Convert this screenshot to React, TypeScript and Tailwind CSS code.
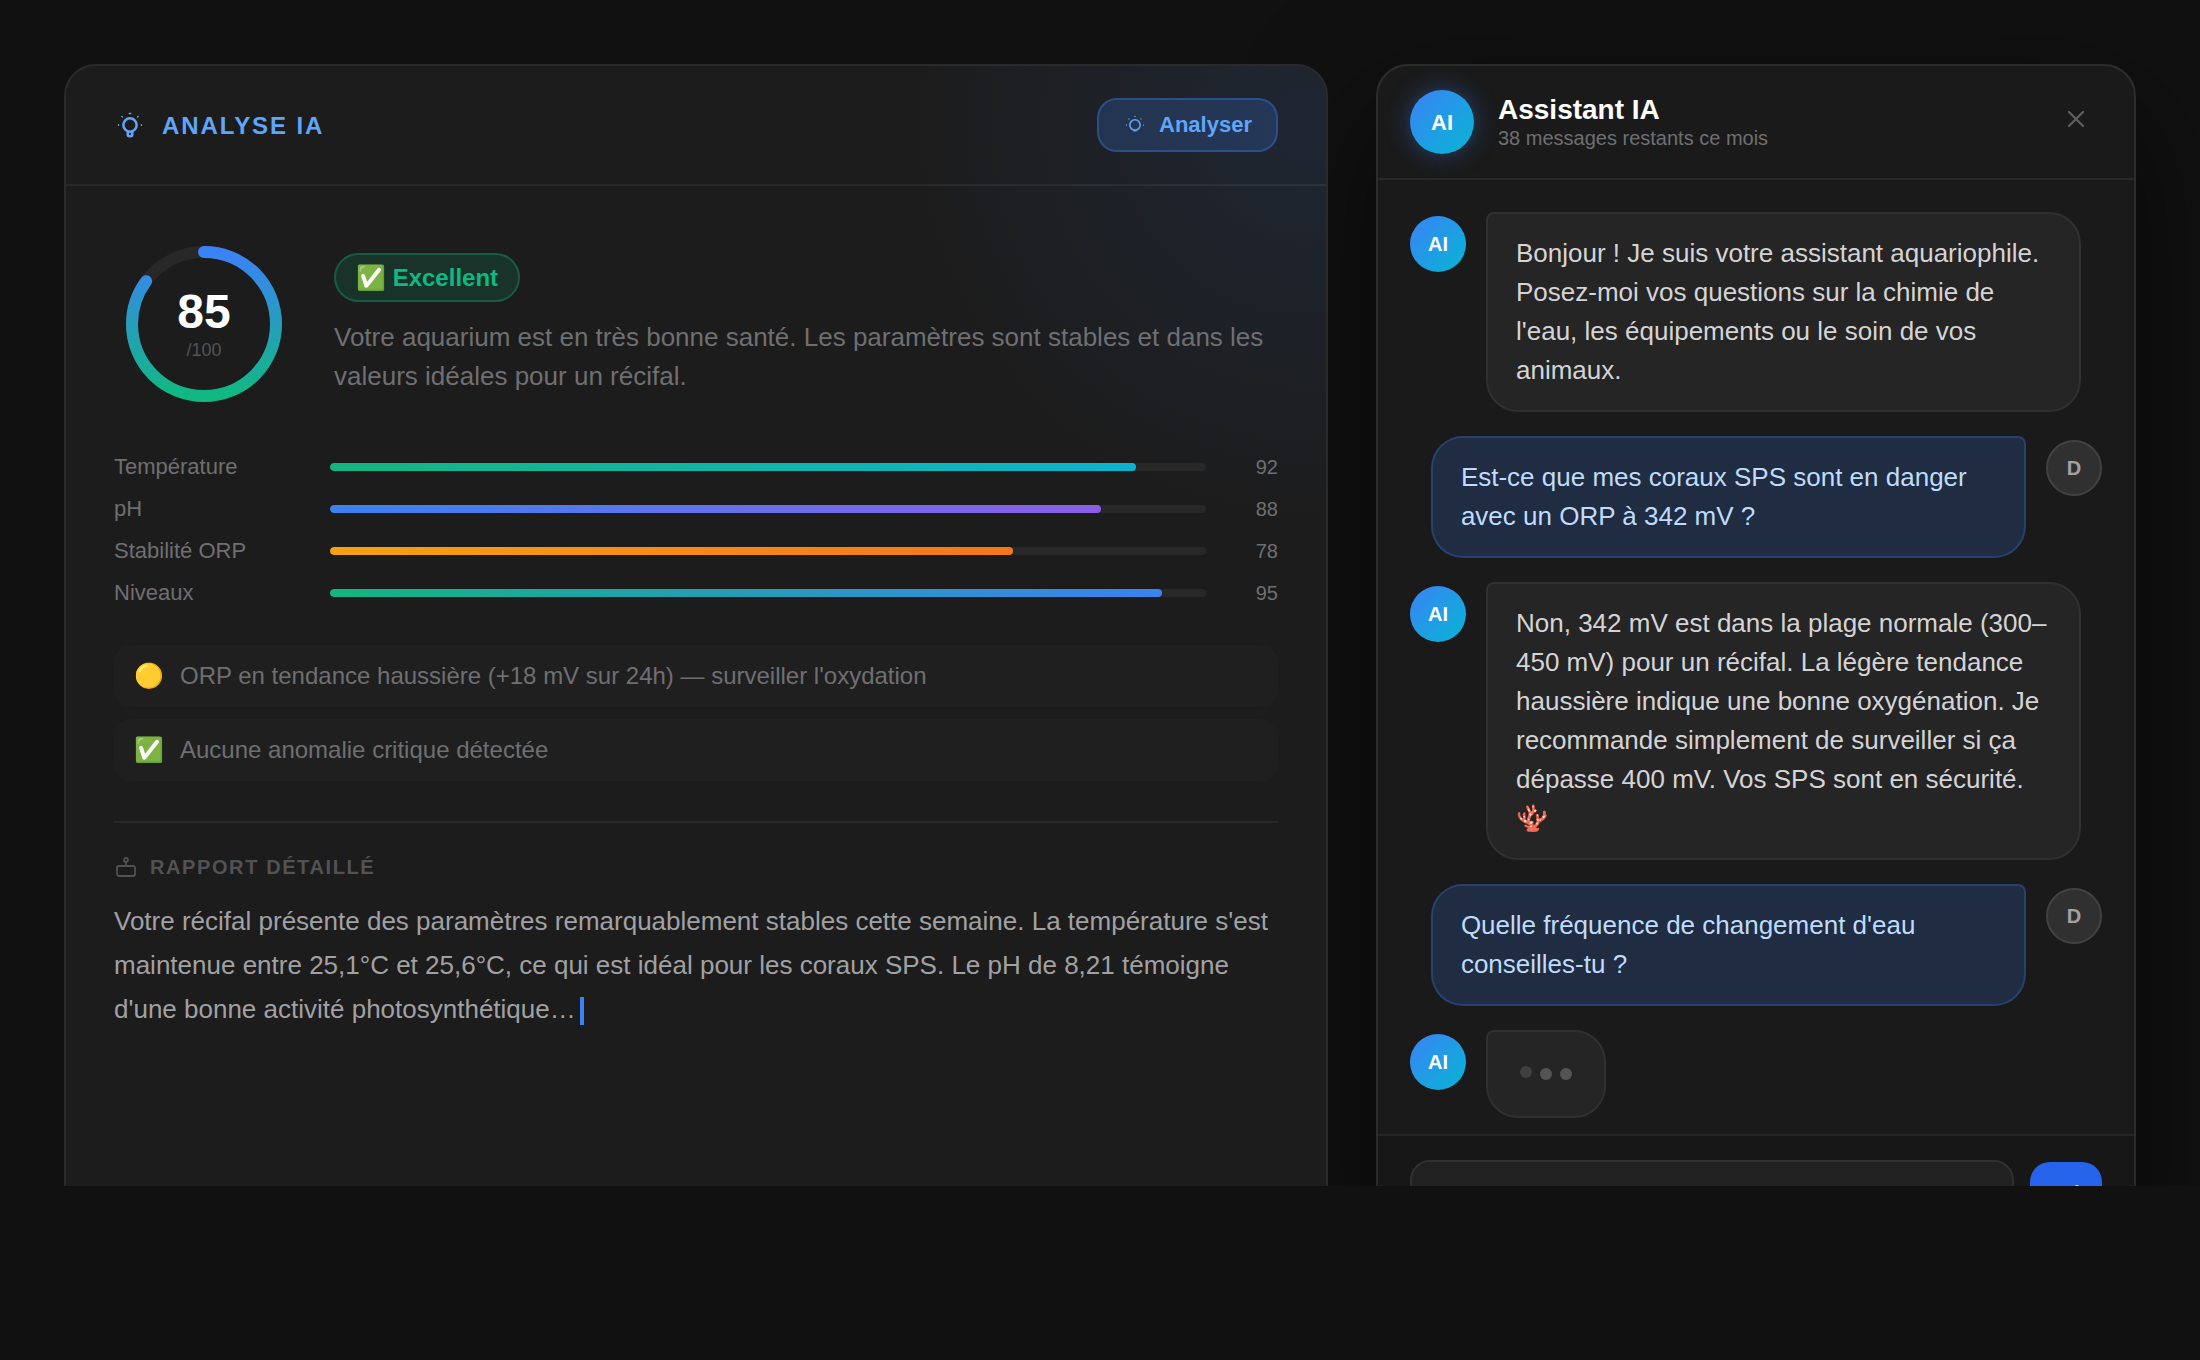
import React from 'react';
import { Send, X } from 'lucide-react';

interface Score {
  label: string;
  value: number;
  gradient: string;
}

interface Message {
  id: number;
  from: 'ai' | 'user';
  text: string;
}

const scores: Score[] = [
  { label: 'Température', value: 92, gradient: 'bg-linear-to-r/srgb from-[#14b57f] to-[#0bb4cf]' },
  { label: 'pH', value: 88, gradient: 'bg-linear-to-r/srgb from-[#3b82f0] to-[#8b5ee6]' },
  { label: 'Stabilité ORP', value: 78, gradient: 'bg-linear-to-r/srgb from-[#f5a112] to-[#f5761c]' },
  { label: 'Niveaux', value: 95, gradient: 'bg-linear-to-r/srgb from-[#14b57f] to-[#3b82f0]' },
];

const alerts = [
  { icon: '🟡', text: "ORP en tendance haussière (+18 mV sur 24h) — surveiller l'oxydation" },
  { icon: '✅', text: 'Aucune anomalie critique détectée' },
];

const messages: Message[] = [
  {
    id: 1,
    from: 'ai',
    text: "Bonjour ! Je suis votre assistant aquariophile. Posez-moi vos questions sur la chimie de l'eau, les équipements ou le soin de vos animaux.",
  },
  { id: 2, from: 'user', text: 'Est-ce que mes coraux SPS sont en danger avec un ORP à 342 mV ?' },
  {
    id: 3,
    from: 'ai',
    text: 'Non, 342 mV est dans la plage normale (300–450 mV) pour un récifal. La légère tendance haussière indique une bonne oxygénation. Je recommande simplement de surveiller si ça dépasse 400 mV. Vos SPS sont en sécurité. 🪸',
  },
  { id: 4, from: 'user', text: "Quelle fréquence de changement d'eau conseilles-tu ?" },
];

function BulbIcon() {
  return (
    <svg viewBox="0 0 24 24" className="w-8 h-8" fill="none" stroke="currentColor" strokeWidth="1.9" strokeLinecap="round" strokeLinejoin="round">
      <circle cx="12" cy="12" r="5" />
      <path d="M10.3 17v2.2a1.2 1.2 0 0 0 1.2 1.2h1a1.2 1.2 0 0 0 1.2-1.2V17" />
      <path d="M11.4 3.4h1.2M5.9 5.6l.5.5M18.1 5.6l-.5.5M3.4 11.7v.6M20.6 11.7v.6" strokeWidth="1" />
    </svg>
  );
}

function SunIcon() {
  return (
    <svg viewBox="0 0 24 24" className="w-6 h-6" fill="none" stroke="currentColor" strokeWidth="1.6" strokeLinecap="round">
      <circle cx="12" cy="12" r="5.2" />
      <path d="M11 17.6h2" strokeWidth="1.8" />
      <path d="M11.8 3.4h.4M5.8 5.8l.3.3M18.2 5.8l-.3.3M3.4 11.8v.4M20.6 11.8v.4" strokeWidth="1.1" />
    </svg>
  );
}

function RobotIcon() {
  return (
    <svg viewBox="0 0 24 24" className="w-6 h-6" fill="none" stroke="currentColor" strokeWidth="1.8" strokeLinecap="round">
      <rect x="3" y="11" width="18" height="10" rx="2" />
      <circle cx="12" cy="5" r="2" />
      <path d="M12 7v4" />
    </svg>
  );
}

function ScoreRing({ score }: { score: number }) {
  const length = 2 * Math.PI * 36;

  return (
    <div className="grid shrink-0 place-items-center">
      <svg viewBox="0 0 90 90" className="col-start-1 row-start-1 w-[180px] h-[180px] -rotate-90" fill="none" strokeWidth="6">
        <defs>
          <linearGradient id="ring">
            <stop offset="0%" stopColor="#10b981" />
            <stop offset="100%" stopColor="#3b82f6" />
          </linearGradient>
        </defs>
        <circle cx="45" cy="45" r="36" stroke="#282828" />
        <circle
          cx="45"
          cy="45"
          r="36"
          stroke="url(#ring)"
          strokeLinecap="round"
          strokeDasharray={`${(length * score) / 100} ${length}`}
        />
      </svg>
      <div className="col-start-1 row-start-1 flex flex-col items-center">
        <span className="text-5xl leading-12 font-bold text-white">{score}</span>
        <span className="mt-1 text-lg leading-5 text-[#525254]">/100</span>
      </div>
    </div>
  );
}

function AnalysisCard() {
  return (
    <section className="relative min-w-0 flex-1 overflow-hidden rounded-[32px] border-2 border-[#2a2a2a] bg-[#1c1c1c]">
      <div className="pointer-events-none absolute -top-[340px] -right-[380px] w-[800px] h-[800px] bg-[radial-gradient(circle,rgba(59,130,246,0.1)_0%,transparent_70%)]" />

      <header className="relative flex items-center justify-between border-b-2 border-white/6 px-12 py-8">
        <div className="flex items-center gap-4 text-[#60a5fa]">
          <BulbIcon />
          <h2 className="text-2xl leading-[27px] font-bold tracking-[0.08em] uppercase">Analyse IA</h2>
        </div>
        <button className="flex items-center gap-3 rounded-[20px] border-2 border-[#3b82f6]/35 bg-[#3b82f6]/20 px-6 py-3 text-[22px] leading-[26px] font-bold text-[#60a5fa]">
          <SunIcon />
          Analyser
        </button>
      </header>

      <div className="relative p-12">
        <div className="flex items-center gap-10">
          <ScoreRing score={85} />
          <div>
            <span className="inline-block rounded-full border-2 border-[#10b981]/30 bg-[#10b981]/15 px-5 py-2 text-2xl leading-[29px] font-bold text-[#10b981]">
              ✅ Excellent
            </span>
            <p className="mt-4 text-[26px] leading-[39px] text-[#6f6f72]">
              Votre aquarium est en très bonne santé. Les paramètres sont stables et dans les valeurs idéales pour un récifal.
            </p>
          </div>
        </div>

        <div className="mt-10 flex flex-col gap-4">
          {scores.map(score => (
            <div key={score.label} className="flex items-center gap-4">
              <span className="w-[200px] text-[22px] leading-[26px] text-[#6f6f72]">{score.label}</span>
              <div className="h-2 flex-1 overflow-hidden rounded-full bg-[#282828]">
                <div className={`h-full rounded-full ${score.gradient}`} style={{ width: `${score.value}%` }} />
              </div>
              <span className="w-14 text-right text-xl leading-6 text-[#6f6f72]">{score.value}</span>
            </div>
          ))}
        </div>

        <ul className="mt-[39px] flex flex-col gap-3">
          {alerts.map(alert => (
            <li key={alert.text} className="flex items-center gap-4 rounded-2xl bg-[#1f1f1f] px-5 py-4 text-2xl leading-[30px] text-[#6f6f72]">
              <span>{alert.icon}</span>
              {alert.text}
            </li>
          ))}
        </ul>

        <div className="mt-10 border-t-2 border-[#282828] pt-8">
          <h3 className="flex items-center gap-3 text-xl leading-6 font-bold tracking-[0.08em] text-[#525254] uppercase">
            <RobotIcon />
            Rapport détaillé
          </h3>
          <p className="mt-5 text-[26px] leading-[44px] text-[#a1a1a4]">
            Votre récifal présente des paramètres remarquablement stables cette semaine. La température s'est maintenue entre
            25,1°C et 25,6°C, ce qui est idéal pour les coraux SPS. Le pH de 8,21 témoigne d'une bonne activité
            photosynthétique…
            <span className="ml-1 inline-block h-7 w-1 bg-[#3b82f6] align-middle" />
          </p>
        </div>
      </div>
    </section>
  );
}

function AiAvatar() {
  return (
    <div className="mt-1 flex h-14 w-14 shrink-0 items-center justify-center rounded-full bg-linear-135/srgb from-[#3b82f6] to-[#06b6d4] text-xl font-bold text-white">
      AI
    </div>
  );
}

function ChatMessage({ message }: { message: Message }) {
  if (message.from === 'user') {
    return (
      <div className="flex flex-row-reverse items-start gap-5">
        <div className="mt-1 flex h-14 w-14 shrink-0 items-center justify-center rounded-full border-2 border-[#424242] bg-[#303030] text-xl font-bold text-[#a1a1a4]">
          D
        </div>
        <p className="max-w-[86%] rounded-[32px] rounded-tr-lg border-2 border-[#3b82f6]/25 bg-[#3b82f6]/18 px-7 py-5 text-[26px] leading-[39px] text-[#bfdbfe]">
          {message.text}
        </p>
      </div>
    );
  }

  return (
    <div className="flex items-start gap-5">
      <AiAvatar />
      <p className="max-w-[86%] rounded-[32px] rounded-tl-lg border-2 border-[#303030] bg-[#252525] px-7 py-5 text-[26px] leading-[39px] text-[#d4d4d6]">
        {message.text}
      </p>
    </div>
  );
}

function ChatPanel() {
  return (
    <section className="flex w-[760px] shrink-0 flex-col overflow-hidden rounded-[32px] border-2 border-[#2c2c2c] bg-[#1a1a1a] shadow-[0_48px_128px_rgba(0,0,0,0.6)]">
      <header className="flex items-center gap-6 border-b-2 border-[#282828] px-8 py-6">
        <div className="flex h-16 w-16 shrink-0 items-center justify-center rounded-full bg-linear-135/srgb from-[#3b82f6] to-[#06b6d4] text-[22px] font-bold text-white shadow-[0_0_24px_rgba(59,130,246,0.4)]">
          AI
        </div>
        <div className="flex-1">
          <h2 className="text-[28px] leading-8 font-bold text-white">Assistant IA</h2>
          <p className="text-xl leading-6 text-[#6f6f72]">38 messages restants ce mois</p>
        </div>
        <button aria-label="Fermer" className="mb-1.5 p-3 text-[#5f5f62]">
          <X className="w-7 h-7" strokeWidth={2} />
        </button>
      </header>

      <div className="flex flex-col gap-6 px-8 pt-8 pb-4">
        {messages.map(message => (
          <ChatMessage key={message.id} message={message} />
        ))}

        <div className="flex items-start gap-5">
          <AiAvatar />
          <div className="flex gap-2 rounded-[32px] rounded-tl-lg border-2 border-[#303030] bg-[#252525] px-8 py-9">
            <span className="h-3 w-3 -translate-y-0.5 rounded-full bg-[#3f3f42]" />
            <span className="h-3 w-3 rounded-full bg-[#545457]" />
            <span className="h-3 w-3 rounded-full bg-[#545457]" />
          </div>
        </div>
      </div>

      <form className="flex items-center gap-4 border-t-2 border-[#242424] bg-[#171717] px-8 py-6" onSubmit={e => e.preventDefault()}>
        <input
          type="text"
          aria-label="Votre message"
          className="h-[76px] min-w-0 flex-1 rounded-[20px] border-2 border-[#303030] bg-[#212121] px-7 text-[26px] text-[#d4d4d6] outline-none"
        />
        <button aria-label="Envoyer" className="flex h-[72px] w-[72px] shrink-0 items-center justify-center rounded-[20px] bg-[#2563eb] text-white">
          <Send className="w-7 h-7" />
        </button>
      </form>
    </section>
  );
}

export default function App() {
  return (
    <main className="min-h-screen bg-[#111111] font-['Liberation_Sans',Arial,sans-serif]">
      {/* preview window: the cards run past its lower edge */}
      <div className="max-h-[1186px] overflow-hidden px-16 pt-16">
        <div className="flex items-stretch gap-12">
          <AnalysisCard />
          <ChatPanel />
        </div>
      </div>
    </main>
  );
}
